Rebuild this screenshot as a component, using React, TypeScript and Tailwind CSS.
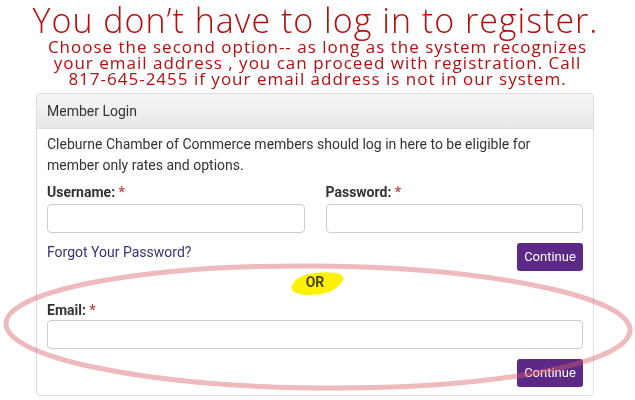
export default function App() {
  return (
    <div className="relative h-[400px] w-[635px] overflow-hidden bg-white font-['Roboto',sans-serif]">
      {/* Heading */}
      <div className="text-center font-['Open_Sans',sans-serif] text-[#b0100f]">
        <h1 className="pr-[4px] pt-[2px] text-[34px] font-light leading-[37px] tracking-[1px]">
          You don’t have to log in to register.
        </h1>
        <p className="text-[17px] leading-[16px] font-normal tracking-[1px]">
          Choose the second option-- as long as the system recognizes
          <br />
          your email address , you can proceed with registration. Call
          <br />
          817-645-2455 if your email address is not in our system.
        </p>
      </div>

      {/* Login panel */}
      <div className="ml-[36px] mt-[6px] w-[558px] rounded-[4px] border border-[#dddddd]">
        <div className="flex h-[35px] items-center rounded-t-[4px] border-b border-[#dddddd] bg-gradient-to-b from-[#f5f5f5] to-[#e8e8e8] px-[10px] text-[14px] text-[#333333]">
          Member Login
        </div>
        <div className="px-[10px] pb-[8px] pt-[5px] text-[14px] text-[#333333]">
          <p className="leading-[21px]">
            Cleburne Chamber of Commerce members should log in here to be eligible for member only rates and
            options.
          </p>

          <div className="mt-[6px] grid grid-cols-2 gap-x-[21px]">
            <div>
              <label className="block font-bold leading-[20px]">
                Username: <span className="text-[#b94a48]">*</span>
              </label>
              <input className="mt-[2px] block h-[29px] w-full rounded-[4px] border border-[#cccccc]" />
            </div>
            <div>
              <label className="block font-bold leading-[20px]">
                Password: <span className="text-[#b94a48]">*</span>
              </label>
              <input className="mt-[2px] block h-[29px] w-full rounded-[4px] border border-[#cccccc]" />
            </div>
          </div>

          <div className="mt-[10px] flex items-start justify-between">
            <a className="leading-[19px] text-[#3d2f78]">Forgot Your Password?</a>
            <button className="h-[28px] w-[66px] rounded-[3px] bg-[#5c2a86] text-[13px] text-white">
              Continue
            </button>
          </div>

          <div className="mt-[1px] text-center font-bold leading-[20px] text-[#4a4a2a]">OR</div>

          <label className="mt-[8px] block font-bold leading-[20px]">
            Email: <span className="text-[#b94a48]">*</span>
          </label>
          <input className="block h-[29px] w-full rounded-[4px] border border-[#cccccc]" />

          <div className="mt-[10px] flex justify-end">
            <button className="h-[28px] w-[66px] rounded-[3px] bg-[#5c2a86] text-[13px] text-white">
              Continue
            </button>
          </div>
        </div>
      </div>

      {/* Yellow highlighter behind OR */}
      <svg className="pointer-events-none absolute left-0 top-0 mix-blend-multiply" width="635" height="400">
        <path
          d="M294 287 C298 276 318 274 332 275 C340 275 343 278 339 282 C335 287 330 291 318 292 C306 293 294 293 294 287 Z"
          fill="#fff200"
          stroke="#fff200"
          strokeWidth="5"
          strokeLinejoin="round"
        />
      </svg>

      {/* Hand-drawn red ellipse */}
      <svg className="pointer-events-none absolute left-0 top-0" width="635" height="400">
        <ellipse
          cx="318"
          cy="327"
          rx="312"
          ry="61"
          transform="rotate(0.6 318 327)"
          fill="none"
          stroke="rgba(214,90,100,0.42)"
          strokeWidth="5"
        />
      </svg>
    </div>
  );
}
